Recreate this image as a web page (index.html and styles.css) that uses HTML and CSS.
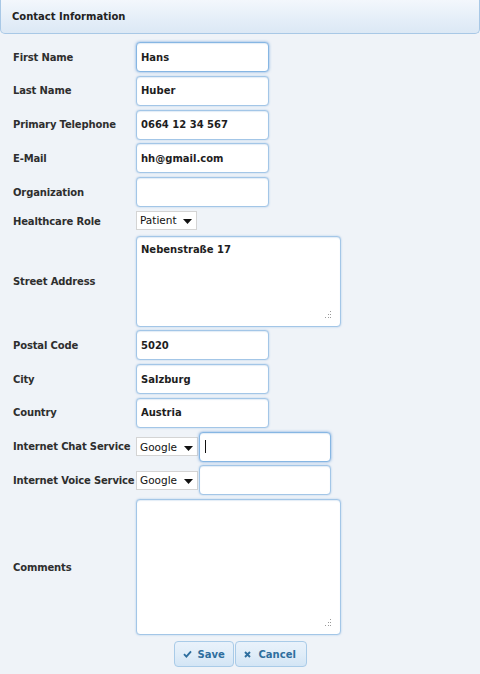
FILE: index.html
```html
<!DOCTYPE html>
<html>
<head>
<meta charset="utf-8">
<link rel="stylesheet" href="styles.css">
</head>
<body>
<div class="header">Contact Information</div>
<form class="form">
  <label class="lbl">First Name</label>
  <div class="ctl"><input class="txt focus" type="text" value="Hans"></div>

  <label class="lbl">Last Name</label>
  <div class="ctl"><input class="txt" type="text" value="Huber"></div>

  <label class="lbl">Primary Telephone</label>
  <div class="ctl"><input class="txt" type="text" value="0664 12 34 567"></div>

  <label class="lbl">E-Mail</label>
  <div class="ctl"><input class="txt" type="text" value="hh@gmail.com"></div>

  <label class="lbl">Organization</label>
  <div class="ctl"><input class="txt" type="text" value=""></div>

  <label class="lbl">Healthcare Role</label>
  <div class="ctl ctl-sel">
    <div class="sel sel-role"><span>Patient</span><svg width="9" height="5" viewBox="0 0 9 5"><path d="M0 0H9L4.5 5Z" fill="#111"/></svg></div>
  </div>

  <label class="lbl">Street Address</label>
  <div class="ctl">
    <div class="area-wrap area-addr">
      <textarea class="area">Nebenstraße 17</textarea>
      <svg class="grip" width="8" height="8" viewBox="0 0 8 8"><g fill="#9a9a9a"><rect x="6" y="0" width="1" height="1"/><rect x="4" y="3" width="1" height="1"/><rect x="6" y="3" width="1" height="1"/><rect x="1" y="6" width="1" height="1"/><rect x="4" y="6" width="1" height="1"/><rect x="6" y="6" width="1" height="1"/></g></svg>
    </div>
  </div>

  <label class="lbl">Postal Code</label>
  <div class="ctl"><input class="txt" type="text" value="5020"></div>

  <label class="lbl">City</label>
  <div class="ctl"><input class="txt" type="text" value="Salzburg"></div>

  <label class="lbl">Country</label>
  <div class="ctl"><input class="txt" type="text" value="Austria"></div>

  <label class="lbl">Internet Chat Service</label>
  <div class="ctl ctl-pair">
    <div class="sel sel-svc"><span>Google</span><svg width="9" height="5" viewBox="0 0 9 5"><path d="M0 0H9L4.5 5Z" fill="#111"/></svg></div>
    <div class="txt txt-svc focus"><span class="caret"></span></div>
  </div>

  <label class="lbl">Internet Voice Service</label>
  <div class="ctl ctl-pair">
    <div class="sel sel-svc"><span>Google</span><svg width="9" height="5" viewBox="0 0 9 5"><path d="M0 0H9L4.5 5Z" fill="#111"/></svg></div>
    <input class="txt txt-svc" type="text" value="">
  </div>

  <label class="lbl">Comments</label>
  <div class="ctl">
    <div class="area-wrap area-comm">
      <textarea class="area"></textarea>
      <svg class="grip" width="8" height="8" viewBox="0 0 8 8"><g fill="#9a9a9a"><rect x="6" y="0" width="1" height="1"/><rect x="4" y="3" width="1" height="1"/><rect x="6" y="3" width="1" height="1"/><rect x="1" y="6" width="1" height="1"/><rect x="4" y="6" width="1" height="1"/><rect x="6" y="6" width="1" height="1"/></g></svg>
    </div>
  </div>
</form>
<div class="buttons">
  <button class="btn btn-save" type="button"><svg width="9" height="8" viewBox="0 0 9 8"><path d="M1 4.2L3.4 6.6L8 1.4" fill="none" stroke="#2e6e9e" stroke-width="1.9"/></svg><span>Save</span></button>
  <button class="btn btn-cancel" type="button"><svg width="7" height="7" viewBox="0 0 7 7"><path d="M1 1L6 6M6 1L1 6" stroke="#2e6e9e" stroke-width="1.9"/></svg><span>Cancel</span></button>
</div>
</body>
</html>
```
FILE: styles.css
```css
html, body {
  margin: 0;
  padding: 0;
}
body {
  width: 480px;
  height: 674px;
  background: #eff3f8;
  font-family: "DejaVu Sans", Verdana, sans-serif;
  font-size: 10px;
  color: #2b2b2b;
  overflow: hidden;
}
.header {
  box-sizing: border-box;
  height: 34px;
  border: 1px solid #a8c8e6;
  border-top: none;
  border-radius: 0 0 5px 5px;
  background: linear-gradient(to bottom, #f3f7fc 0%, #e4eef8 60%, #dce8f5 100%);
  font-weight: bold;
  font-size: 10px;
  color: #222;
  padding: 11px 0 0 11px;
}
.form {
  display: grid;
  grid-template-columns: 123px 1fr;
  row-gap: 3.75px;
  padding: 8px 0 0 13px;
  align-items: center;
}
.lbl {
  font-weight: bold;
  font-size: 10px;
  letter-spacing: -0.15px;
  color: #2e2e2e;
  white-space: nowrap;
}
.ctl {
  display: flex;
  align-items: center;
}
.txt {
  box-sizing: border-box;
  width: 133px;
  height: 30px;
  margin: 0;
  border: 1px solid #a3c6e7;
  border-radius: 4px;
  background: #fff;
  box-shadow: 0 0 2px rgba(120, 170, 220, 0.6), inset 0 1px 1px rgba(140, 180, 220, 0.25);
  padding: 0 4px;
  font-family: "DejaVu Sans", Verdana, sans-serif;
  font-weight: bold;
  font-size: 10px;
  color: #1e1e1e;
  outline: none;
}
.txt.focus {
  border-color: #86b6e3;
  box-shadow: 0 0 3px rgba(90, 150, 215, 0.8), inset 0 1px 1px rgba(140, 180, 220, 0.25);
}
.ctl-sel {
  margin-bottom: 2px;
}
.sel {
  box-sizing: border-box;
  height: 19px;
  display: flex;
  align-items: center;
  justify-content: space-between;
  background: #fff;
  border: 1px solid #d4d4d4;
  padding: 0 4px 0 3px;
  font-size: 10.5px;
  color: #111;
}
.sel svg {
  margin-top: 3px;
}
.sel-role {
  width: 61px;
}
.sel-svc {
  width: 62px;
}
.ctl-pair {
  gap: 1px;
}
.txt-svc {
  width: 132px;
  display: flex;
  align-items: center;
}
.caret {
  display: block;
  width: 1px;
  height: 13px;
  background: #111;
  margin-left: 1px;
}
.area-wrap {
  position: relative;
  box-sizing: border-box;
  width: 205px;
  border: 1px solid #a3c6e7;
  border-radius: 4px;
  background: #fff;
  box-shadow: 0 0 2px rgba(120, 170, 220, 0.6), inset 0 1px 1px rgba(140, 180, 220, 0.25);
  display: flex;
}
.area-addr {
  height: 91px;
}
.area-comm {
  height: 136px;
}
.area {
  flex: 1;
  border: none;
  background: transparent;
  resize: none;
  outline: none;
  margin: 0;
  padding: 7px 4px;
  font-family: "DejaVu Sans", Verdana, sans-serif;
  font-weight: bold;
  font-size: 10px;
  color: #1e1e1e;
}
.grip {
  position: absolute;
  right: 8px;
  bottom: 7px;
}
.buttons {
  display: flex;
  justify-content: center;
  gap: 1px;
  margin-top: 6px;
}
.btn {
  box-sizing: border-box;
  height: 26px;
  display: flex;
  align-items: center;
  gap: 6px;
  border: 1px solid #a9cbe8;
  border-radius: 4px;
  background: linear-gradient(to bottom, #e9f2fb 0%, #dfecf8 55%, #d3e5f5 100%);
  color: #2e6e9e;
  font-family: "DejaVu Sans", Verdana, sans-serif;
  font-weight: bold;
  font-size: 10px;
  padding: 0 0 0 8px;
  margin: 0;
}
.btn-save {
  width: 60px;
}
.btn-cancel {
  width: 72px;
  gap: 8px;
}
```
